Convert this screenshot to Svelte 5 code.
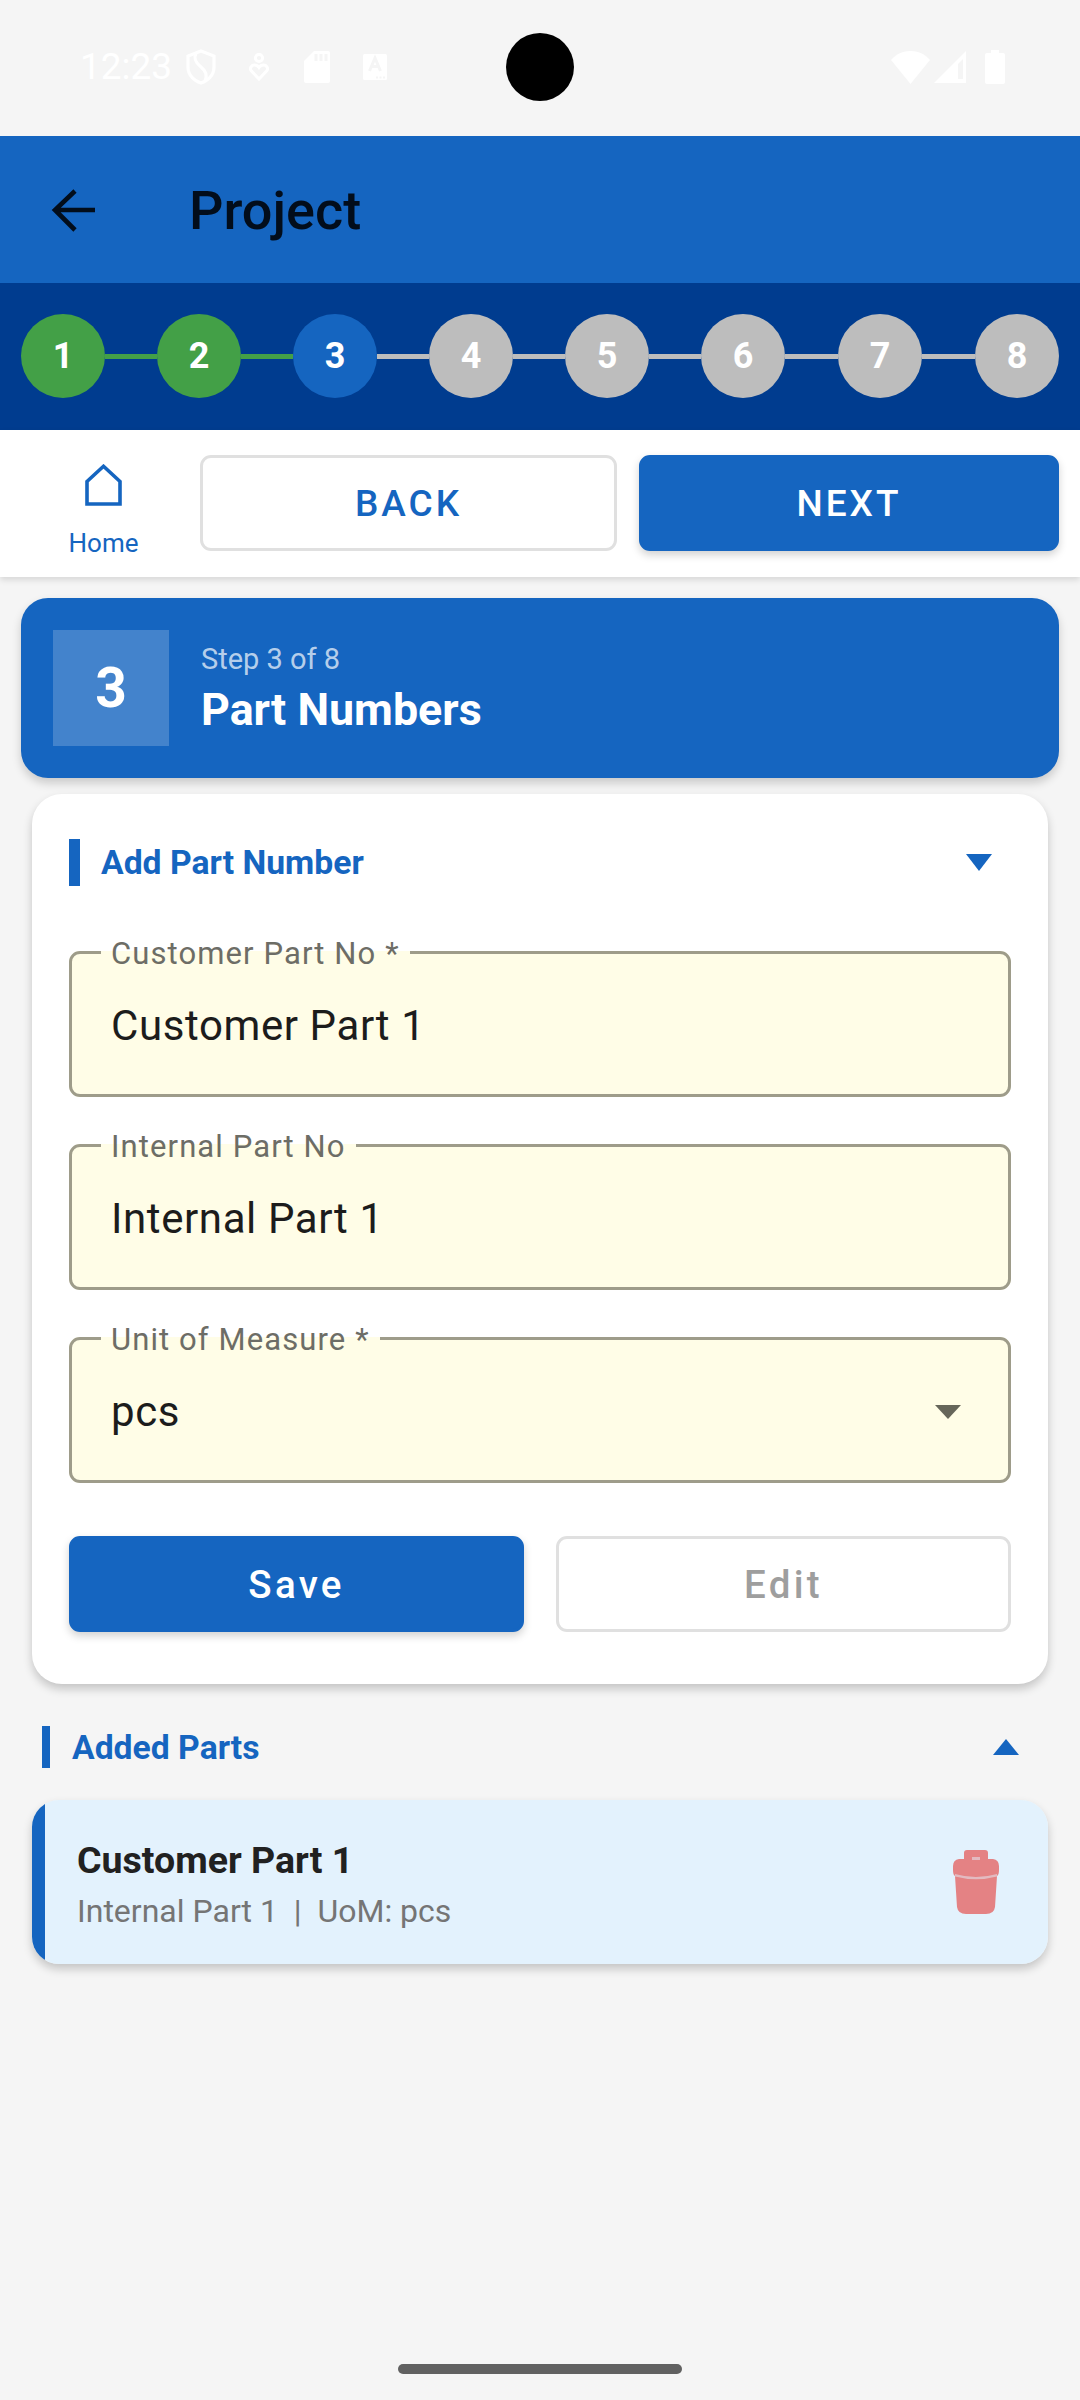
<script lang="ts">
  type Step = { n: number; state: 'done' | 'current' | 'todo' };

  const steps: Step[] = [1, 2, 3, 4, 5, 6, 7, 8].map((n) => ({
    n,
    state: n < 3 ? 'done' : n === 3 ? 'current' : 'todo'
  }));

  const fields = [
    { label: 'Customer Part No *', value: 'Customer Part 1', select: false },
    { label: 'Internal Part No', value: 'Internal Part 1', select: false },
    { label: 'Unit of Measure *', value: 'pcs', select: true }
  ];
</script>

<div class="page">
  <div class="statusbar">
    <span class="time">12:23</span>
    <span class="slot">
      <svg width="30" height="36" viewBox="0 0 30 36" fill="none" stroke="#fff" stroke-width="3.2">
        <path d="M15 2 L28 7 V18 C28 26 22 32 15 34 C8 32 2 26 2 18 V7 Z" />
        <path d="M10 4 C7 10 10 14 15 18 C20 22 22 26 19 32" />
      </svg>
    </span>
    <span class="slot">
      <svg width="20" height="28" viewBox="0 0 20 28" fill="none" stroke="#fff" stroke-width="3">
        <circle cx="10" cy="5" r="3.6" />
        <path d="M10 26 L2 17.5 C0.5 15 2.5 12 5.5 12 C7.5 12 9 13 10 14.5 C11 13 12.5 12 14.5 12 C17.5 12 19.5 15 18 17.5 Z" />
      </svg>
    </span>
    <span class="slot">
      <svg width="26" height="32" viewBox="0 0 26 32">
        <path fill="#fff" d="M10 0 H24 Q26 0 26 2 V30 Q26 32 24 32 H2 Q0 32 0 30 V10 Z" />
        <path fill="#f5f5f5" d="M10.5 3 h3 v7 h-3 z M15.500 3 h3 v7 h-3 z M20.500 3 h3 v7 h-3 z" />
      </svg>
    </span>
    <span class="slot">
      <svg width="24" height="26" viewBox="0 0 24 26">
        <rect width="24" height="26" rx="1.500" fill="#fff" />
        <path fill="none" stroke="#f5f5f5" stroke-width="3" d="M6.500 17 L12 4 L17.500 17 M8.500 12.500 H15.500" />
        <path fill="none" stroke="#f5f5f5" stroke-width="1.800" stroke-dasharray="2 1.500" d="M13 23.500 H23" />
      </svg>
    </span>
    <div class="status-right">
      <svg width="39" height="33" viewBox="0 0 39 33"><path fill="#fff" d="M19.500 33 L0 9 C5 3 12 0 19.500 0 C27 0 34 3 39 9 Z" /></svg>
      <svg width="32" height="32" viewBox="0 0 32 32">
        <path fill="#fff" d="M32 0 V32 H0 Z" />
        <path fill="#f5f5f5" d="M29 8 V28 H24 V13 Z" />
      </svg>
      <svg width="20" height="34" viewBox="0 0 20 34">
        <path fill="#fff" d="M6 0 H14 V3 H18 Q20 3 20 5 V32 Q20 34 18 34 H2 Q0 34 0 32 V5 Q0 3 2 3 H6 Z" />
      </svg>
    </div>
  </div>
  <div class="camera"></div>

  <header class="appbar">
    <svg class="back" width="44" height="44" viewBox="0 0 44 44" fill="none" stroke="#020d1b" stroke-width="4.600">
      <path d="M45 22 H4 M24 3 L4 22 L24 42" />
    </svg>
    <h1>Project</h1>
  </header>

  <div class="stepper">
    {#each steps as step, i}
      {#if i > 0}
        <span class="line" class:green={step.n <= 3}></span>
      {/if}
      <span class="dot {step.state}">{step.n}</span>
    {/each}
  </div>

  <nav class="navrow">
    <div class="home">
      <svg width="37" height="42" viewBox="0 0 37 42" fill="none" stroke="#1565c0" stroke-width="3.600">
        <path d="M18.500 2.300 L2 17.500 V40 H35 V17.500 Z" />
      </svg>
      <span>Home</span>
    </div>
    <button class="btn outline back-btn">BACK</button>
    <button class="btn solid">NEXT</button>
  </nav>

  <section class="stepcard">
    <div class="stepnum">3</div>
    <div class="stepinfo">
      <span class="stepof">Step 3 of 8</span>
      <span class="steptitle">Part Numbers</span>
    </div>
  </section>

  <section class="formcard">
    <div class="section-head">
      <span class="bar"></span>
      <span class="section-title">Add Part Number</span>
      <svg class="caret" width="26" height="17" viewBox="0 0 26 17"><path fill="#1565c0" d="M0 0 H26 L13 17 Z" /></svg>
    </div>

    <div class="fields">
      {#each fields as field}
        <fieldset>
          <legend><span>{field.label}</span></legend>
          <div class="value">
            <span>{field.value}</span>
            {#if field.select}
              <svg width="26" height="14" viewBox="0 0 26 14"><path fill="#66665a" d="M0 0 H26 L13 14 Z" /></svg>
            {/if}
          </div>
        </fieldset>
      {/each}
    </div>

    <div class="actions">
      <button class="btn solid small">Save</button>
      <button class="btn outline small muted">Edit</button>
    </div>
  </section>

  <div class="added-head">
    <span class="bar thin"></span>
    <span class="section-title">Added Parts</span>
    <svg class="caret" width="26" height="16" viewBox="0 0 26 16"><path fill="#1565c0" d="M13 0 L26 16 H0 Z" /></svg>
  </div>

  <article class="part">
    <div class="part-text">
      <span class="part-name">Customer Part 1</span>
      <span class="part-meta">Internal Part 1 &nbsp;|&nbsp; UoM: pcs</span>
    </div>
    <svg class="trash" width="48" height="66" viewBox="0 0 48 66">
      <g opacity="0.6">
        <path fill="#e53935" d="M12 10 V4 Q12 1 15 1 H33 Q36 1 36 4 V10 H41 Q47 11 47 17 V21 Q47 26 45 27 L43 58 Q42 65 34 65 H14 Q6 65 5 58 L3 27 Q1 26 1 21 V17 Q1 11 7 10 Z" />
        <path fill="#e3f2fd" opacity="0.5" d="M20 8 h8 v3 h-8 z M3 25 Q24 31 45 25 V27.500 Q24 33 3 27.500 Z" />
      </g>
    </svg>
  </article>

  <div class="homebar"></div>
</div>

<style>
  :global(body) {
    background: #f5f5f5;
  }

  .page {
    position: relative;
    display: flex;
    flex-direction: column;
    min-height: 2400px;
    background: #f5f5f5;
    font-family: Roboto, sans-serif;
  }

  .statusbar {
    display: flex;
    align-items: center;
    height: 136px;
    padding: 0 75px 0 80px;
    box-sizing: border-box;
    color: #fff;
  }

  .time {
    width: 92px;
    font-size: 37px;
    font-weight: 400;
    line-height: 44px;
    position: relative;
    top: -1px;
  }

  .slot {
    display: flex;
    align-items: center;
    justify-content: center;
    width: 58px;
    height: 44px;
    position: relative;
    top: -1px;
  }

  .status-right {
    display: flex;
    align-items: center;
    gap: 4px;
    margin-left: auto;
    position: relative;
    top: -1px;
  }

  .status-right svg:last-child {
    margin-left: 15px;
  }

  .camera {
    position: absolute;
    left: 506px;
    top: 33px;
    width: 68px;
    height: 68px;
    border-radius: 50%;
    background: #000;
  }

  .appbar {
    display: flex;
    align-items: center;
    height: 147px;
    background: #1565c0;
    padding-left: 51px;
  }

  .back {
    flex: none;
  }

  h1 {
    margin: 2px 0 0 94px;
    font-size: 54px;
    font-weight: 500;
    color: #020d1b;
  }

  .stepper {
    display: flex;
    align-items: center;
    height: 147px;
    box-sizing: border-box;
    padding: 0 21px 1px;
    background: #003c8f;
  }

  .dot {
    flex: none;
    display: flex;
    align-items: center;
    justify-content: center;
    width: 84px;
    height: 84px;
    border-radius: 50%;
    color: #fff;
    font-size: 36px;
    font-weight: 700;
  }

  .dot.done {
    background: #43a047;
  }

  .dot.current {
    background: #1565c0;
  }

  .dot.todo {
    background: #bdbdbd;
  }

  .line {
    flex: none;
    width: 52px;
    height: 5px;
    background: #bdbdbd;
  }

  .line:nth-last-child(2),
  .line:nth-last-child(4) {
    width: 53px;
  }

  .line.green {
    background: #43a047;
  }

  .navrow {
    display: flex;
    align-items: center;
    gap: 22px;
    height: 147px;
    box-sizing: border-box;
    padding: 0 21px 1px 0;
    background: #fff;
    box-shadow: 0 3px 6px rgba(0, 0, 0, 0.12);
    position: relative;
  }

  .home {
    flex: none;
    display: flex;
    flex-direction: column;
    align-items: center;
    width: 177px;
    margin-left: 15px;
    margin-right: -14px;
    margin-top: 16px;
    color: #1565c0;
    font-size: 26px;
  }

  .home span {
    margin-top: 22px;
    line-height: 30px;
  }

  .btn {
    flex: 1;
    height: 96px;
    box-sizing: border-box;
    border-radius: 11px;
    font-family: Roboto, sans-serif;
    font-size: 37px;
    font-weight: 500;
    letter-spacing: 3px;
    padding: 0;
  }

  .back-btn {
    flex: none;
    width: 417px;
  }

  .btn.solid {
    border: 3px solid #1565c0;
    background: #1565c0;
    color: #fff;
    box-shadow: 0 4px 8px rgba(0, 0, 0, 0.18);
  }

  .btn.outline {
    border: 3px solid #e0e0e0;
    background: #fff;
    color: #1565c0;
  }

  .btn.muted {
    color: #9e9e9e;
  }

  .stepcard {
    display: flex;
    align-items: center;
    gap: 32px;
    margin: 21px 21px 0;
    padding: 32px;
    border-radius: 27px;
    background: #1565c0;
    box-shadow: 0 5px 10px rgba(0, 0, 0, 0.18);
    position: relative;
  }

  .stepnum {
    display: flex;
    align-items: center;
    justify-content: center;
    width: 116px;
    height: 116px;
    background: rgba(255, 255, 255, 0.2);
    color: #fff;
    font-size: 55px;
    font-weight: 700;
  }

  .stepinfo {
    display: flex;
    flex-direction: column;
    gap: 8px;
  }

  .stepof {
    color: rgba(255, 255, 255, 0.7);
    font-size: 29px;
    line-height: 36px;
    position: relative;
    top: 1px;
  }

  .steptitle {
    color: #fff;
    font-size: 44.800px;
    font-weight: 700;
    line-height: 52px;
  }

  .formcard {
    margin: 16px 32px 0;
    padding: 45px 37px 52px;
    border-radius: 30px;
    background: #fff;
    box-shadow: 0 5px 10px rgba(0, 0, 0, 0.2);
  }

  .section-head {
    display: flex;
    align-items: center;
    height: 47px;
    padding-right: 19px;
  }

  .bar {
    width: 11px;
    align-self: stretch;
    margin-right: 21px;
    background: #1565c0;
  }

  .bar.thin {
    width: 8px;
    margin-right: 22px;
  }

  .section-title {
    color: #1565c0;
    font-size: 33.700px;
    font-weight: 700;
  }

  .caret {
    margin-left: auto;
  }

  .fields {
    display: flex;
    flex-direction: column;
    gap: 30px;
    margin-top: 48px;
  }

  fieldset {
    box-sizing: border-box;
    height: 163px;
    margin: 0;
    padding: 0 47px 0 39px;
    border: 3px solid #9e9c8a;
    border-radius: 11px;
    background: #fffde7;
  }

  legend {
    margin-left: -10px;
    padding: 0 10px;
    color: #6d6d66;
    font-size: 31px;
    line-height: 36px;
    letter-spacing: 1.100px;
  }

  legend span {
    position: relative;
    top: 2px;
  }

  .value {
    display: flex;
    align-items: center;
    justify-content: space-between;
    height: 54px;
    margin-top: 29px;
    color: #1c1c1c;
    font-size: 42px;
    letter-spacing: 0.600px;
    line-height: 54px;
  }

  .actions {
    display: flex;
    gap: 32px;
    margin-top: 53px;
  }

  .btn.small {
    font-size: 38.500px;
    letter-spacing: 3.300px;
  }

  .added-head {
    display: flex;
    align-items: center;
    height: 42px;
    margin: 42px 61px 0 42px;
  }

  .part {
    display: flex;
    align-items: center;
    justify-content: space-between;
    height: 164px;
    box-sizing: border-box;
    margin: 32px 32px 0;
    padding: 0 48px 0 45px;
    border-radius: 27px;
    background: linear-gradient(90deg, #1565c0 13px, #e3f2fd 13px);
    box-shadow: 0 5px 10px rgba(0, 0, 0, 0.2);
  }

  .part-text {
    display: flex;
    flex-direction: column;
    gap: 10px;
    padding-top: 6px;
  }

  .part-name {
    color: #212121;
    font-size: 37.500px;
    font-weight: 700;
    line-height: 42px;
  }

  .part-meta {
    color: #757575;
    font-size: 32px;
    line-height: 40px;
  }

  .homebar {
    width: 284px;
    height: 10px;
    margin: auto auto 26px;
    border-radius: 5px;
    background: #616161;
  }
</style>
